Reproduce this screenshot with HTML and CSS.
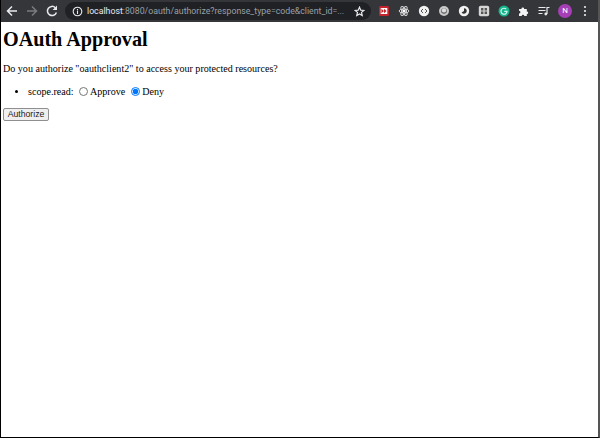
FILE: index.html
```
<!DOCTYPE html>
<html lang="en">
<head>
<meta charset="utf-8">
<title>OAuth Approval</title>
<link rel="stylesheet" href="styles.css">
</head>
<body>
<div class="window">
  <header class="toolbar">
    <svg class="nav" viewBox="0 0 14 14" width="14" height="14"><path d="M12 7H3M7 2.5 2.5 7 7 11.5" fill="none" stroke="#e8eaed" stroke-width="1.5"/></svg>
    <svg class="nav" viewBox="0 0 14 14" width="14" height="14"><path d="M2 7h9M7 2.5 11.5 7 7 11.5" fill="none" stroke="#7a7c7f" stroke-width="1.5"/></svg>
    <svg class="nav" viewBox="0 0 14 14" width="14" height="14"><path d="M11.4 8.5A4.6 4.6 0 1 1 10.3 3.7" fill="none" stroke="#e8eaed" stroke-width="1.5"/><path d="M12 1.5v4.4H7.6z" fill="#e8eaed"/></svg>
    <div class="omnibox">
      <svg class="info" viewBox="0 0 12 12" width="11" height="11"><circle cx="6" cy="6" r="4.7" fill="none" stroke="#e8eaed" stroke-width="1.2"/><path d="M6 5.3v3.3M6 3.3v1.2" stroke="#e8eaed" stroke-width="1.2"/></svg>
      <span class="url"><span class="host">localhost</span>:8080/oauth/authorize?response_type=code&amp;client_id=...</span>
      <svg class="star" viewBox="0 0 12 12" width="11" height="11"><path d="M6 1.3 7.4 4.5l3.4.3-2.6 2.2.8 3.4L6 8.6l-3 1.8.8-3.4L1.2 4.8l3.4-.3z" fill="none" stroke="#e8eaed" stroke-width="1.3"/></svg>
    </div>
    <div class="extensions">
      <svg viewBox="0 0 12 12" width="12" height="12"><rect x="1" y="1" width="10" height="10" rx="1.5" fill="#c4242b"/><rect x="2.7" y="3" width="6.6" height="6" fill="#fff"/><path d="M3.4 3.8 6 6 3.4 8.2zM6 3.8 8.6 6 6 8.2z" fill="#c4242b"/></svg>
      <svg viewBox="0 0 12 12" width="12" height="12"><g fill="none" stroke="#d8d8d8" stroke-width="1"><ellipse cx="6" cy="6" rx="5" ry="2"/><ellipse cx="6" cy="6" rx="5" ry="2" transform="rotate(60 6 6)"/><ellipse cx="6" cy="6" rx="5" ry="2" transform="rotate(120 6 6)"/></g><circle cx="6" cy="6" r="1.3" fill="#fff"/></svg>
      <svg viewBox="0 0 12 12" width="12" height="12"><circle cx="6" cy="6" r="5.2" fill="#f1f1f1"/><path d="M5 4 3 6l2 2M7 4l2 2-2 2" fill="none" stroke="#444" stroke-width=".9"/></svg>
      <svg viewBox="0 0 12 12" width="12" height="12"><circle cx="6" cy="6" r="5" fill="#c9c9c9"/><circle cx="6" cy="6" r="2.8" fill="#555"/><circle cx="6" cy="5.4" r="2.2" fill="#ddd"/></svg>
      <svg viewBox="0 0 12 12" width="12" height="12"><circle cx="6" cy="6" r="5.2" fill="#f1f1f1"/><path d="M6 3.2A2.8 2.8 0 1 1 3.6 7.5L6 6z" fill="#333"/></svg>
      <svg viewBox="0 0 12 12" width="12" height="12"><rect x=".8" y=".8" width="10.4" height="10.4" rx="1.8" fill="#d5d5d5"/><path d="M3 3h2.4v2.4H3zM6.6 3H9v2.4H6.6zM3 6.6h2.4V9H3zM6.6 6.6H9V9H6.6z" fill="#555"/></svg>
      <svg viewBox="0 0 12 12" width="12" height="12"><circle cx="6" cy="6" r="5.5" fill="#15b48c"/><path d="M8.2 4.2A3 3 0 1 0 9 6.3H6.3" fill="none" stroke="#d5f5ec" stroke-width="1.2"/></svg>
      <svg viewBox="0 0 12 12" width="12" height="12"><path d="M1 4h2.4a1.4 1.4 0 0 1 2.8 0h2.6v2.4a1.4 1.4 0 0 1 0 2.8V11H6.3a1.3 1.3 0 0 0-2.6 0H1V8.6a1.4 1.4 0 0 0 0-2.8z" fill="#f1f3f4"/></svg>
      <svg viewBox="0 0 12 12" width="12" height="12"><path d="M.5 2.5h7M.5 5.5h7M.5 8.5h4" stroke="#e8eaed" stroke-width="1.1"/><path d="M9 9V2.5h2.5" fill="none" stroke="#e8eaed" stroke-width="1.2"/><circle cx="7.8" cy="9" r="1.4" fill="#e8eaed"/></svg>
    </div>
    <span class="avatar">N</span>
    <svg class="menu" viewBox="0 0 4 12" width="4" height="12"><circle cx="2" cy="2" r="1.1" fill="#e8eaed"/><circle cx="2" cy="6" r="1.1" fill="#e8eaed"/><circle cx="2" cy="10" r="1.1" fill="#e8eaed"/></svg>
  </header>
  <main class="page">
    <h1 class="title">OAuth Approval</h1>
    <p class="question">Do you authorize "oauthclient2" to access your protected resources?</p>
    <form class="form">
      <ul class="scopes">
        <li>scope.read: <label class="choice"><input class="radio" type="radio" name="scope"> Approve</label> <label class="choice"><input class="radio" type="radio" name="scope" checked> Deny</label></li>
      </ul>
      <button class="submit" type="button">Authorize</button>
    </form>
  </main>
</div>
</body>
</html>
```
FILE: styles.css
```
* { box-sizing: border-box; }
html, body { margin: 0; height: 100%; background: #fff; }
.window {
  width: 600px;
  height: 438px;
  display: flex;
  flex-direction: column;
  border-style: solid;
  border-color: #000 #555 #000 #000;
  border-width: 0 2px 1px 1px;
  overflow: hidden;
}
.toolbar {
  height: 22px;
  flex: none;
  display: flex;
  align-items: center;
  background: #35363a;
  padding-left: 4px;
}
.nav { margin-right: 6px; flex: none; }
.omnibox {
  width: 306px;
  height: 18px;
  margin-left: 0;
  padding: 0 6px 0 7px;
  display: flex;
  align-items: center;
  background: #202124;
  border-radius: 9px;
  flex: none;
}
.info { flex: none; }
.url {
  flex: 1;
  margin-left: 4px;
  font: 8.75px "Roboto", sans-serif;
  color: #9aa0a6;
  white-space: nowrap;
  overflow: hidden;
}
.host { color: #e8eaed; }
.star { flex: none; }
.extensions {
  display: flex;
  gap: 8px;
  margin-left: 7px;
  flex: none;
}
.avatar {
  flex: none;
  width: 14px;
  height: 14px;
  margin-left: 8px;
  border-radius: 50%;
  background: #a63fb5;
  color: #fff;
  font: 8px/14px "Roboto", sans-serif;
  text-align: center;
}
.menu { margin-left: 11px; flex: none; }
.page {
  flex: 1;
  padding: 5px 2px;
  font: 10.07px "Liberation Serif", serif;
  color: #000;
}
.title { margin: 0 0 11px; font: bold 20.15px/24px "Liberation Serif", serif; }
.question { margin: 0 0 10px; line-height: 13px; }
.form { margin: 0; }
.scopes { margin: 0 0 9px; padding-left: 25px; line-height: 14px; }
.choice { margin-left: 3px; }
.radio { width: 9px; height: 9px; margin: 0; vertical-align: -1px; }
.submit {
  display: block;
  width: 46px;
  height: 13px;
  padding: 0;
  font: 8.7px/11px "Liberation Sans", sans-serif;
  color: #222;
  background: #efefef;
  border: 1px solid #8f8f8f;
  border-radius: 2px;
}
```
